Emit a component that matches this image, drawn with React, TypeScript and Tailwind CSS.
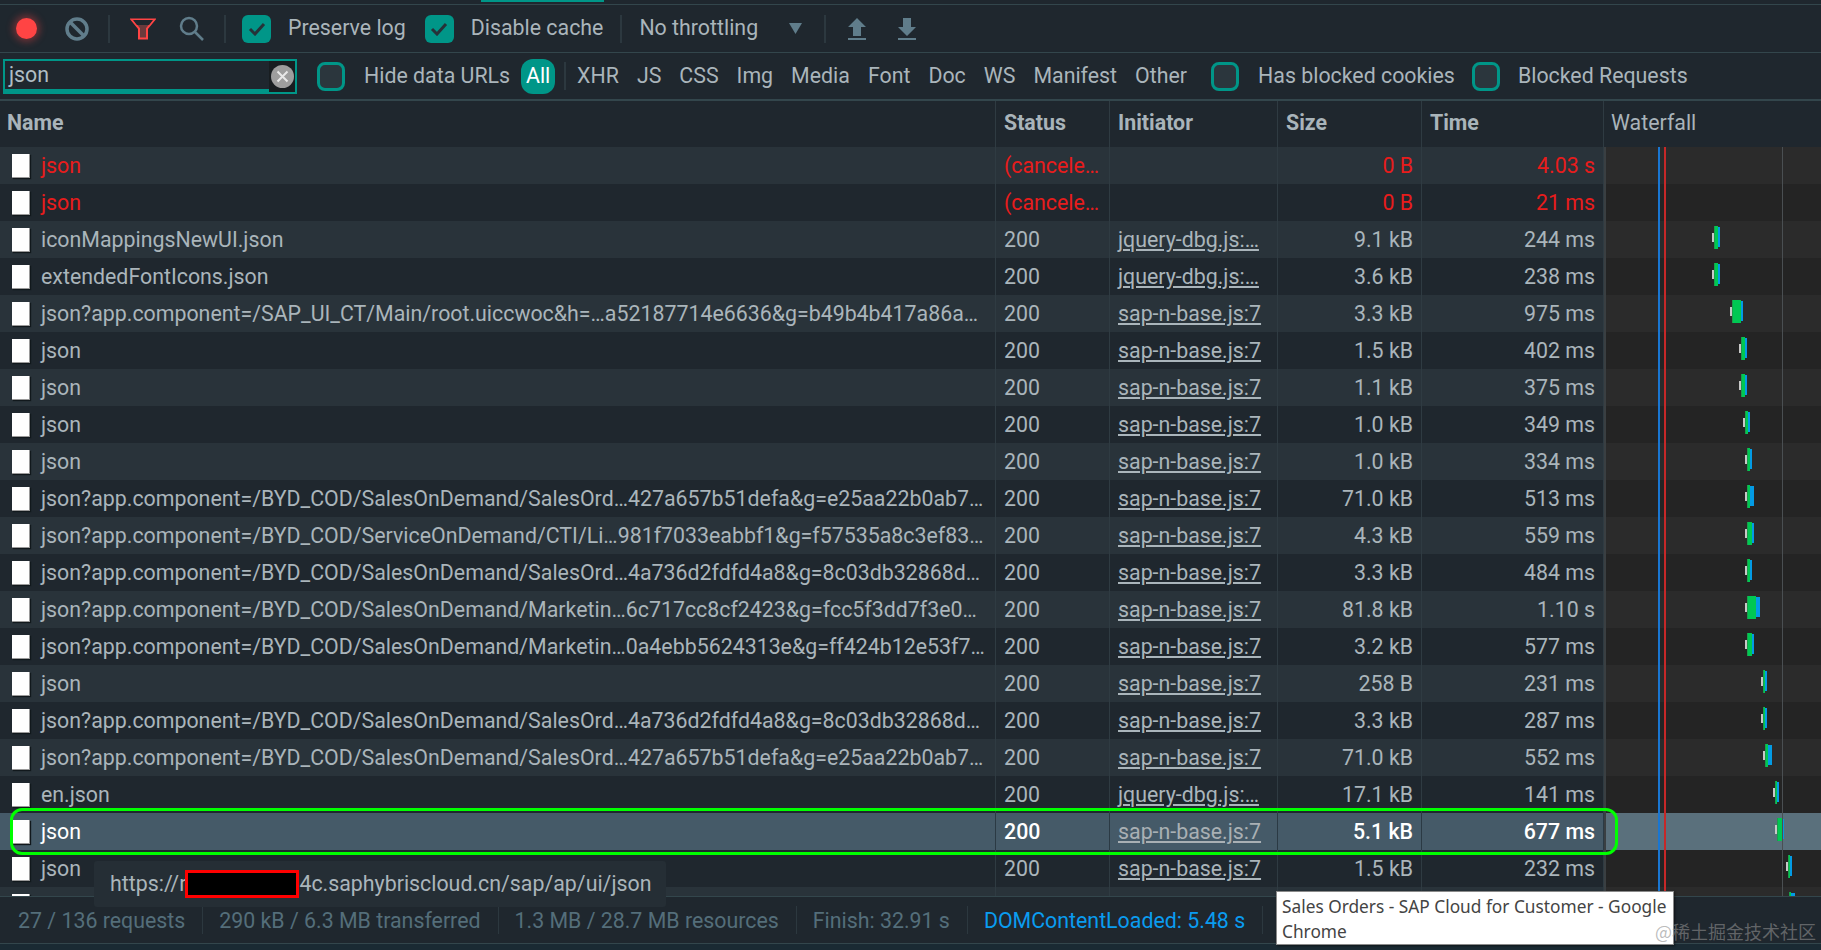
const rows = [
  { name: "json", status: "(cancele…", init: "", size: "0 B", time: "4.03 s", red: true },
  { name: "json", status: "(cancele…", init: "", size: "0 B", time: "21 ms", red: true },
  { name: "iconMappingsNewUI.json", status: "200", init: "jquery-dbg.js:…", size: "9.1 kB", time: "244 ms", bar: [111, 4, 2] },
  { name: "extendedFontIcons.json", status: "200", init: "jquery-dbg.js:…", size: "3.6 kB", time: "238 ms", bar: [111, 4, 2] },
  { name: "json?app.component=/SAP_UI_CT/Main/root.uiccwoc&h=…a52187714e6636&g=b49b4b417a86a…", status: "200", init: "sap-n-base.js:7", size: "3.3 kB", time: "975 ms", bar: [129, 9, 2] },
  { name: "json", status: "200", init: "sap-n-base.js:7", size: "1.5 kB", time: "402 ms", bar: [138, 4, 2] },
  { name: "json", status: "200", init: "sap-n-base.js:7", size: "1.1 kB", time: "375 ms", bar: [138, 4, 2] },
  { name: "json", status: "200", init: "sap-n-base.js:7", size: "1.0 kB", time: "349 ms", bar: [142, 3, 2] },
  { name: "json", status: "200", init: "sap-n-base.js:7", size: "1.0 kB", time: "334 ms", bar: [144, 3, 2] },
  { name: "json?app.component=/BYD_COD/SalesOnDemand/SalesOrd…427a657b51defa&g=e25aa22b0ab7…", status: "200", init: "sap-n-base.js:7", size: "71.0 kB", time: "513 ms", bar: [144, 3, 4] },
  { name: "json?app.component=/BYD_COD/ServiceOnDemand/CTI/Li…981f7033eabbf1&g=f57535a8c3ef83…", status: "200", init: "sap-n-base.js:7", size: "4.3 kB", time: "559 ms", bar: [144, 5, 2] },
  { name: "json?app.component=/BYD_COD/SalesOnDemand/SalesOrd…4a736d2fdfd4a8&g=8c03db32868d…", status: "200", init: "sap-n-base.js:7", size: "3.3 kB", time: "484 ms", bar: [144, 3, 2] },
  { name: "json?app.component=/BYD_COD/SalesOnDemand/Marketin…6c717cc8cf2423&g=fcc5f3dd7f3e0…", status: "200", init: "sap-n-base.js:7", size: "81.8 kB", time: "1.10 s", bar: [144, 9, 4] },
  { name: "json?app.component=/BYD_COD/SalesOnDemand/Marketin…0a4ebb5624313e&g=ff424b12e53f7…", status: "200", init: "sap-n-base.js:7", size: "3.2 kB", time: "577 ms", bar: [144, 5, 2] },
  { name: "json", status: "200", init: "sap-n-base.js:7", size: "258 B", time: "231 ms", bar: [160, 2, 2] },
  { name: "json?app.component=/BYD_COD/SalesOnDemand/SalesOrd…4a736d2fdfd4a8&g=8c03db32868d…", status: "200", init: "sap-n-base.js:7", size: "3.3 kB", time: "287 ms", bar: [160, 2, 2] },
  { name: "json?app.component=/BYD_COD/SalesOnDemand/SalesOrd…427a657b51defa&g=e25aa22b0ab7…", status: "200", init: "sap-n-base.js:7", size: "71.0 kB", time: "552 ms", bar: [162, 3, 4] },
  { name: "en.json", status: "200", init: "jquery-dbg.js:…", size: "17.1 kB", time: "141 ms", bar: [172, 2, 2] },
  { name: "json", status: "200", init: "sap-n-base.js:7", size: "5.1 kB", time: "677 ms", bar: [174, 5, 2], selected: true },
  { name: "json", status: "200", init: "sap-n-base.js:7", size: "1.5 kB", time: "232 ms", bar: [185, 2, 2] },
  // only the top of this row shows above the footer
  { name: "", status: "", init: "", size: "", time: "", bar: [186, 2, 4] },
];

const filters = ["XHR", "JS", "CSS", "Img", "Media", "Font", "Doc", "WS", "Manifest", "Other"];

function Checked({ className }: { className: string }) {
  return (
    <div className={`w-[29px] h-[28px] rounded-[6px] bg-[#009688] flex items-center justify-center shrink-0 ${className}`}>
      <svg width="18" height="14" viewBox="0 0 18 14" fill="none">
        <path d="M2 7l5 5L16 2" stroke="#263238" strokeWidth="3" />
      </svg>
    </div>
  );
}

function Unchecked({ className }: { className: string }) {
  return <div className={`w-[28px] h-[29px] rounded-[8px] border-[3px] border-[#009688] bg-[#2b363d] shrink-0 ${className}`} />;
}

function Sep({ className }: { className: string }) {
  return <div className={`h-[28px] bg-[#2c383f] shrink-0 ${className}`} />;
}

function DocIcon() {
  return <div className="w-[18px] h-[24px] bg-white border-r border-b border-[#9a9a9a] shrink-0 shadow-[1px_1px_1px_#11181c]" />;
}

function Bar({ bar }: { bar: number[] }) {
  const x = bar[0] - 3;
  const g = bar[1];
  const b = bar[2];
  return (
    <svg className="absolute left-0 top-0" width="217" height="37">
      <rect x={x - 2} y="12" width="2" height="9" fill="#c8c8c8" />
      <rect x={x + g} y="6" width={b} height="20" fill="#039be5" />
      <rect x={x} y="5" width={g} height="23" fill="#00c853" />
      <rect x={x} y="5" width="1" height="23" fill="#1b9e4b" />
    </svg>
  );
}

function Row({ r, index }: { r: (typeof rows)[number]; index: number }) {
  const bg = r.selected ? "bg-[#455a68]" : index % 2 === 0 ? "bg-[#29333a]" : "bg-[#1f272e]";
  const wf = r.selected ? "bg-[#5a707c]" : index % 2 === 0 ? "bg-[#2b2b2b]" : "bg-[#242424]";
  const text = r.red ? "text-[#e81c1c]" : r.selected ? "text-white font-medium" : "text-[#aab5bb]";
  const cell = r.selected ? "border-[#2b3a44]" : "border-[#2f3b42]";
  return (
    <div className={`grid grid-cols-[996px_114px_168px_144px_182px_1fr] h-[37px] leading-[37px] shrink-0 ${bg} ${text}`}>
      <div className={`flex items-center border-r ${cell} pl-[12px] gap-[11px] overflow-hidden`}>
        <DocIcon />
        <span className={`whitespace-nowrap ${r.selected ? "font-normal" : ""}`}>{r.name}</span>
      </div>
      <div className={`border-r ${cell} pl-[8px] whitespace-nowrap overflow-hidden`}>{r.status}</div>
      <div className={`border-r ${cell} pl-[8px] whitespace-nowrap overflow-hidden underline underline-offset-2 ${r.selected ? "text-[#a9b0b4] font-normal" : ""}`}>
        {r.init}
      </div>
      <div className={`border-r ${cell} pr-[8px] text-right`}>{r.size}</div>
      <div className={`border-r ${cell} pr-[8px] text-right`}>{r.time}</div>
      <div className={`relative border-l-2 border-[#3a3f42] ${wf}`}>{r.bar && <Bar bar={r.bar} />}</div>
    </div>
  );
}

export default function App() {
  return (
    <div className="relative h-[950px] w-[1821px] overflow-hidden flex flex-col bg-[#1f272e] font-['Roboto',sans-serif] text-[21.35px] text-[#aab5bb]">
      {/* top strip with the active tab marker */}
      <div className="h-[4px] shrink-0 flex">
        <div className="ml-[481px] w-[123px] h-[2px] bg-[#009688]" />
      </div>

      <div className="h-[49px] shrink-0 border-y border-[#33464c] flex items-center">
        <div className="ml-[16px] w-[21px] h-[21px] rounded-full bg-[#ff4444] shadow-[0_0_7px_3px_rgba(255,68,68,0.35)] shrink-0" />
        <svg className="ml-[28px] shrink-0" width="24" height="24" viewBox="0 0 24 24" fill="none">
          <circle cx="12" cy="12" r="10" stroke="#607d8b" strokeWidth="3.5" />
          <path d="M5 5l14 14" stroke="#607d8b" strokeWidth="3.5" />
        </svg>
        <Sep className="ml-[19px] w-[2px]" />
        <svg className="ml-[20px] shrink-0" width="26" height="22" viewBox="0 0 26 22" fill="none">
          <path d="M1.500 1.500h23l-7.500 9v10h-8v-10z" fill="#6b3a3c" stroke="#ff4444" strokeWidth="2" />
          <path d="M3 2h20l-4 5H7z" fill="#1f272e" />
        </svg>
        <svg className="ml-[23px] shrink-0" width="25" height="25" viewBox="0 0 25 25" fill="none">
          <circle cx="10" cy="10" r="8" stroke="#607d8b" strokeWidth="2.500" />
          <path d="M16 16l8 8" stroke="#607d8b" strokeWidth="2.500" />
        </svg>
        <Sep className="ml-[20px] w-[2px]" />
        <Checked className="ml-[16px]" />
        <span className="ml-[17px]">Preserve log</span>
        <Checked className="ml-[19px]" />
        <span className="ml-[17px]">Disable cache</span>
        <Sep className="ml-[17px] w-[2px]" />
        <span className="ml-[17px]">No throttling</span>
        <svg className="ml-[31px] shrink-0" width="13" height="11" viewBox="0 0 13 11">
          <path d="M0 0h13L6.500 11z" fill="#607d8b" />
        </svg>
        <Sep className="ml-[22px] w-[2px]" />
        <svg className="ml-[22px] shrink-0" width="18" height="22" viewBox="0 0 18 22">
          <path d="M9 0l9 9h-5v9H5V9H0z" fill="#607d8b" />
          <rect y="20" width="18" height="2" fill="#607d8b" />
        </svg>
        <svg className="ml-[32px] shrink-0" width="18" height="22" viewBox="0 0 18 22">
          <path d="M5 0h8v9h5l-9 9-9-9h5z" fill="#607d8b" />
          <rect y="20" width="18" height="2" fill="#607d8b" />
        </svg>
      </div>

      <div className="h-[46px] shrink-0 flex items-center">
        <div className="ml-[3px] w-[294px] h-[35px] border-2 border-[#009688] flex shrink-0 relative">
          <div className="flex-1 border-b-[3px] border-[#009688] pl-[4px] leading-[27px] text-[#b0bec5]">json</div>
          <div className="w-[26px] bg-[#181d20] flex items-center justify-center">
            <svg width="23" height="23" viewBox="0 0 23 23">
              <circle cx="11.500" cy="11.500" r="11.500" fill="#9e9e9e" />
              <path d="M6.500 6.500l10 10M16.500 6.500l-10 10" stroke="#e8e8e8" strokeWidth="2" />
            </svg>
          </div>
        </div>
        <Unchecked className="ml-[20px]" />
        <span className="ml-[19px]">Hide data URLs</span>
        <div className="ml-[11px] w-[34px] h-[35px] rounded-[12px] bg-[#009688] text-white flex items-center justify-center shrink-0">All</div>
        <Sep className="ml-[9px] w-[2px]" />
        <div className="ml-[11px] flex gap-[18px]">
          {filters.map((label) => (
            <span key={label}>{label}</span>
          ))}
        </div>
        <Unchecked className="ml-[24px]" />
        <span className="ml-[19px]">Has blocked cookies</span>
        <Unchecked className="ml-[17px]" />
        <span className="ml-[18px]">Blocked Requests</span>
      </div>

      <div className="h-[48px] shrink-0 border-t-2 border-[#33464c] grid grid-cols-[996px_114px_168px_144px_182px_1fr] leading-[44px] font-bold text-[#a9b4ba]">
        <div className="border-r border-[#2f3b42] pl-[7px]">Name</div>
        <div className="border-r border-[#2f3b42] pl-[8px]">Status</div>
        <div className="border-r border-[#2f3b42] pl-[8px]">Initiator</div>
        <div className="border-r border-[#2f3b42] pl-[8px]">Size</div>
        <div className="border-r border-[#2f3b42] pl-[8px]">Time</div>
        <div className="pl-[7px] font-normal">Waterfall</div>
      </div>

      <div className="relative flex-1 min-h-0 overflow-hidden flex flex-col">
        {rows.map((r, i) => (
          <Row key={i} r={r} index={i} />
        ))}
        {/* event markers drawn across the waterfall */}
        <div className="absolute top-0 bottom-0 left-[1658px] w-[2px] bg-[#1976d2]" />
        <div className="absolute top-0 bottom-0 left-[1664px] w-[2px] bg-[#c62828]" />
        <div className="absolute top-0 bottom-0 left-[1782px] w-[1px] bg-[#4a4f52]" />
      </div>

      <div className="h-[48px] shrink-0 border-y border-[#33464c] flex items-center text-[#546e7a]">
        <span className="ml-[18px] pt-[3px]">27 / 136 requests</span>
        <Sep className="ml-[17px] w-[1px]" />
        <span className="ml-[16px] pt-[3px]">290 kB / 6.3 MB transferred</span>
        <Sep className="ml-[17px] w-[1px]" />
        <span className="ml-[16px] pt-[3px]">1.3 MB / 28.7 MB resources</span>
        <Sep className="ml-[17px] w-[1px]" />
        <span className="ml-[16px] pt-[3px]">Finish: 32.91 s</span>
        <Sep className="ml-[17px] w-[1px]" />
        <span className="ml-[16px] pt-[3px] text-[#0a9cf0]">DOMContentLoaded: 5.48 s</span>
        <Sep className="ml-[17px] w-[1px]" />
      </div>
      <div className="h-[6px] shrink-0 bg-[#1a2a33]" />

      {/* annotation around the selected request */}
      <div className="absolute left-[10px] top-[808px] w-[1608px] h-[47px] rounded-[12px] border-[3px] border-[#00ff00] pointer-events-none" />

      {/* url tooltip */}
      <div className="absolute left-[94px] top-[861px] w-[572px] h-[46px] rounded-[3px] bg-[#252e35] flex items-center pl-[16px] text-[#aab5bb]">
        <span>https://r</span>
        <div className="w-[114px] h-[28px] bg-black border-[3px] border-[#ff0000] shrink-0 -ml-[1px]" />
        <span>4c.saphybriscloud.cn/sap/ap/ui/json</span>
      </div>

      {/* native window title tooltip */}
      <div className="absolute left-[1276px] top-[891px] w-[398px] h-[54px] bg-white border border-[#8a8a8a] pl-[5px] pt-[2px] font-['Noto_Sans',sans-serif] text-[17.3px] leading-[25px] text-[#444444] shadow-[1px_1px_2px_rgba(0,0,0,0.5)]">
        <div className="whitespace-nowrap">Sales Orders - SAP Cloud for Customer - Google</div>
        <div>Chrome</div>
      </div>

      <div className="absolute left-[1655px] top-[918px] font-['Noto_Sans_CJK_SC',sans-serif] text-[18px] leading-[26px] text-[#8f8f8f]/60 whitespace-nowrap">
        @稀土掘金技术社区
      </div>
    </div>
  );
}
